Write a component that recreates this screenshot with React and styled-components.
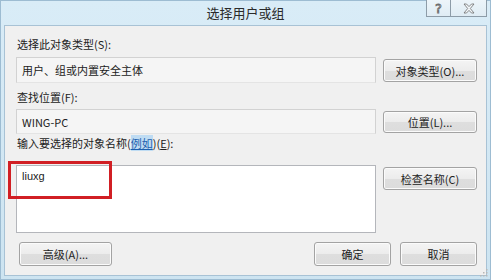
import styled, { createGlobalStyle } from 'styled-components';

const GlobalStyle = createGlobalStyle`
  html, body {
    margin: 0;
    padding: 0;
    background: #ffffff;
  }
  body {
    width: 491px;
    height: 280px;
    overflow: hidden;
  }
`

const Window = styled.div`
  box-sizing: border-box;
  width: 491px;
  height: 280px;
  display: flex;
  flex-direction: column;
  padding: 0 3px 3px 3px;
  border: 1px solid #9dbcd2;
  background: linear-gradient(#d9ecf7, #cde4f1);
  font-family: "Noto Sans CJK SC", "Noto Sans", sans-serif;
  color: #222222;
`

const TitleBar = styled.div`
  height: 24px;
  display: grid;
  grid-template-columns: 1fr auto 1fr;
  align-items: start;
`

const Title = styled.div`
  grid-column: 2;
  font-size: 13px;
  line-height: 23px;
  color: #2a2a2a;
`

const CaptionButtons = styled.div`
  grid-column: 3;
  justify-self: end;
  display: flex;
  margin-top: -1px;
`

const CaptionButton = styled.div`
  box-sizing: border-box;
  width: ${p => p.$wide ? 36 : 25}px;
  height: 17px;
  display: flex;
  align-items: center;
  justify-content: center;
  border: 1px solid #8d9ca8;
  border-top: none;
  border-left-width: ${p => p.$wide ? 0 : 1}px;
  background: linear-gradient(#edf5fa, #dfecf4);
  font-family: "DejaVu Sans", sans-serif;
  font-size: 13px;
  color: transparent;
  -webkit-text-stroke: 0.8px #6b6b6b;
`

const Client = styled.div`
  flex: 1;
  display: flex;
  flex-direction: column;
  padding: 10px 9px 0 11px;
  border: 1px solid #a8c2d5;
  background: #f0f0f0;
`

const Label = styled.div`
  font-size: 11px;
  line-height: 16px;
  padding-left: 1px;
  margin-top: ${p => p.$top || 0}px;
  margin-bottom: ${p => p.$bottom || 4}px;
`

const Link = styled.span`
  color: #1d5fae;
  text-decoration: underline;
  background: #bfdcf3;
`

const Key = styled.span`
  text-decoration: underline;
`

const Row = styled.div`
  display: flex;
  align-items: flex-start;
  gap: 7px;
`

const Field = styled.div`
  box-sizing: border-box;
  flex: 1;
  height: ${p => p.$h}px;
  display: flex;
  align-items: center;
  padding: 0 5px;
  border: 1px solid #d2d2d2;
  border-bottom-color: #e4e4e4;
  background: #f5f5f5;
  font-size: 11px;
`

const TextArea = styled.div`
  position: relative;
  box-sizing: border-box;
  flex: 1;
  height: 68px;
  padding: 3px 5px;
  border: 1px solid #b4b6bb;
  background: #ffffff;
  font-family: "Liberation Sans", "Noto Sans", sans-serif;
  font-size: 11px;
  line-height: 15px;
`

const Highlight = styled.div`
  position: absolute;
  left: -9px;
  top: -5px;
  box-sizing: border-box;
  width: 104px;
  height: 38px;
  border: 3px solid #d11f24;
`

const Button = styled.button`
  box-sizing: border-box;
  width: ${p => p.$w || 94}px;
  height: ${p => p.$h || 23}px;
  margin-top: ${p => p.$mt || 0}px;
  margin-left: ${p => p.$ml || 0}px;
  padding: 0;
  border: 1px solid #a3a3a3;
  border-radius: 3px;
  background: linear-gradient(#f4f4f4 0%, #ececec 50%, #dedede 51%, #dcdcdc 100%);
  box-shadow: inset 0 0 0 1px #fbfbfb;
  font-family: "Noto Sans CJK SC", "Noto Sans", sans-serif;
  font-size: 11px;
  color: #222222;
`

const ButtonBar = styled.div`
  display: flex;
  align-items: center;
  gap: 9px;
  margin-top: 9px;
`

const Spacer = styled.div`
  flex: 1;
`

const Grip = styled.svg`
  position: absolute;
  right: 3px;
  bottom: 3px;
`

const Frame = styled.div`
  position: relative;
`

export default function App() {
  return (
    <Frame>
      <GlobalStyle />
      <Window>
        <TitleBar>
          <Title>选择用户或组</Title>
          <CaptionButtons>
            <CaptionButton>?</CaptionButton>
            <CaptionButton $wide>
              <svg width="12" height="11" viewBox="0 0 12 11">
                <path
                  d="M1 1 H3.5 L6 3.6 L8.5 1 H11 L7.3 5.5 L11 10 H8.5 L6 7.4 L3.5 10 H1 L4.7 5.5 Z"
                  fill="#f4f8fb"
                  stroke="#6b6b6b"
                  strokeWidth="0.8"
                />
              </svg>
            </CaptionButton>
          </CaptionButtons>
        </TitleBar>
        <Client>
          <Label $bottom={5}>选择此对象类型(S):</Label>
          <Row>
            <Field $h={26}>用户、组或内置安全主体</Field>
            <Button $mt={2}>对象类型(O)...</Button>
          </Row>
          <Label $top={6}>查找位置(F):</Label>
          <Row>
            <Field $h={25}>WING-PC</Field>
            <Button $mt={2} $h={22}>位置(L)...</Button>
          </Row>
          <Label $top={1} $bottom={14}>
            输入要选择的对象名称(<Link>例如</Link>)(<Key>E</Key>):
          </Label>
          <Row>
            <TextArea>
              liuxg
              <Highlight />
            </TextArea>
            <Button $mt={2}>检查名称(C)</Button>
          </Row>
          <ButtonBar>
            <Button $w={93} $h={24} $ml={3}>高级(A)...</Button>
            <Spacer />
            <Button $w={77} $h={24}>确定</Button>
            <Button $w={77} $h={24}>取消</Button>
          </ButtonBar>
        </Client>
      </Window>
      <Grip width="8" height="8" viewBox="0 0 8 8">
        <rect x="6" y="0" width="1.5" height="1.5" fill="#b8b8b8" />
        <rect x="3" y="3" width="1.5" height="1.5" fill="#b8b8b8" />
        <rect x="6" y="3" width="1.5" height="1.5" fill="#b8b8b8" />
        <rect x="0" y="6" width="1.5" height="1.5" fill="#b8b8b8" />
        <rect x="3" y="6" width="1.5" height="1.5" fill="#b8b8b8" />
        <rect x="6" y="6" width="1.5" height="1.5" fill="#b8b8b8" />
      </Grip>
    </Frame>
  );
}
